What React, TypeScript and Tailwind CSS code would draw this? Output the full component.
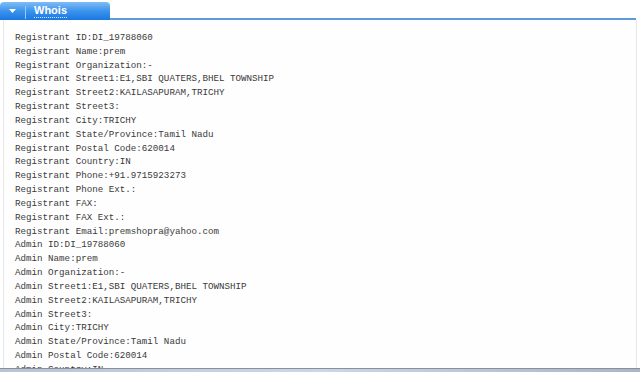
const registrant = [
  "ID:DI_19788060",
  "Name:prem",
  "Organization:-",
  "Street1:E1,SBI QUATERS,BHEL TOWNSHIP",
  "Street2:KAILASAPURAM,TRICHY",
  "Street3:",
  "City:TRICHY",
  "State/Province:Tamil Nadu",
  "Postal Code:620014",
  "Country:IN",
  "Phone:+91.9715923273",
  "Phone Ext.:",
  "FAX:",
  "FAX Ext.:",
  "Email:premshopra@yahoo.com",
];

const admin = [
  "ID:DI_19788060",
  "Name:prem",
  "Organization:-",
  "Street1:E1,SBI QUATERS,BHEL TOWNSHIP",
  "Street2:KAILASAPURAM,TRICHY",
  "Street3:",
  "City:TRICHY",
  "State/Province:Tamil Nadu",
  "Postal Code:620014",
  "Country:IN",
];

const lines = [
  ...registrant.map((l) => `Registrant ${l}`),
  ...admin.map((l) => `Admin ${l}`),
];

export default function App() {
  return (
    <div className="relative w-[640px] h-[372px] overflow-hidden bg-white flex flex-col">
      {/* Tab header */}
      <div className="flex items-end pt-[2px] shrink-0">
        <div className="w-[110px] h-[18px] rounded-t-[4px] bg-gradient-to-b from-[#7dbcf6] via-[#3b93ec] to-[#1877e2] flex items-center">
          <div className="w-[25px] h-full flex items-center justify-center">
            <svg width="7" height="4" viewBox="0 0 7 4">
              <path d="M0 0 L7 0 L3.5 4 Z" fill="#ffffff" />
            </svg>
          </div>
          <div className="w-px h-[13px] bg-[#9ccaf5] mt-[3px]" />
          <span
            className="ml-[8px] text-[11px] font-bold text-white leading-none pb-[1px] border-b border-dotted border-[#cfe6fb]"
            style={{ fontFamily: '"Liberation Sans", Arial, sans-serif' }}
          >
            Whois
          </span>
        </div>
        <div className="flex-1 h-[2px] bg-[#5b9bd8] mr-[4px]" />
      </div>

      {/* Whois body */}
      <div className="flex-1 ml-[3px] mr-[3px] border-l border-r border-[#e8e8e8] bg-[#fefefe] pl-[11px] pt-[11px]">
        {lines.map((l, i) => (
          <div
            key={i}
            className="text-[9.2px] leading-[13.83px] text-[#3a3a3a] whitespace-pre"
            style={{ fontFamily: '"Liberation Mono", "Courier New", monospace' }}
          >
            {l}
          </div>
        ))}
      </div>

      {/* window edge at bottom */}
      <div className="absolute left-0 right-0 bottom-0 h-[4px] border-t border-[#8a9099] bg-gradient-to-r from-[#b8c4d2] via-[#c9d8e8] to-[#a9b6c4]" />
    </div>
  );
}
